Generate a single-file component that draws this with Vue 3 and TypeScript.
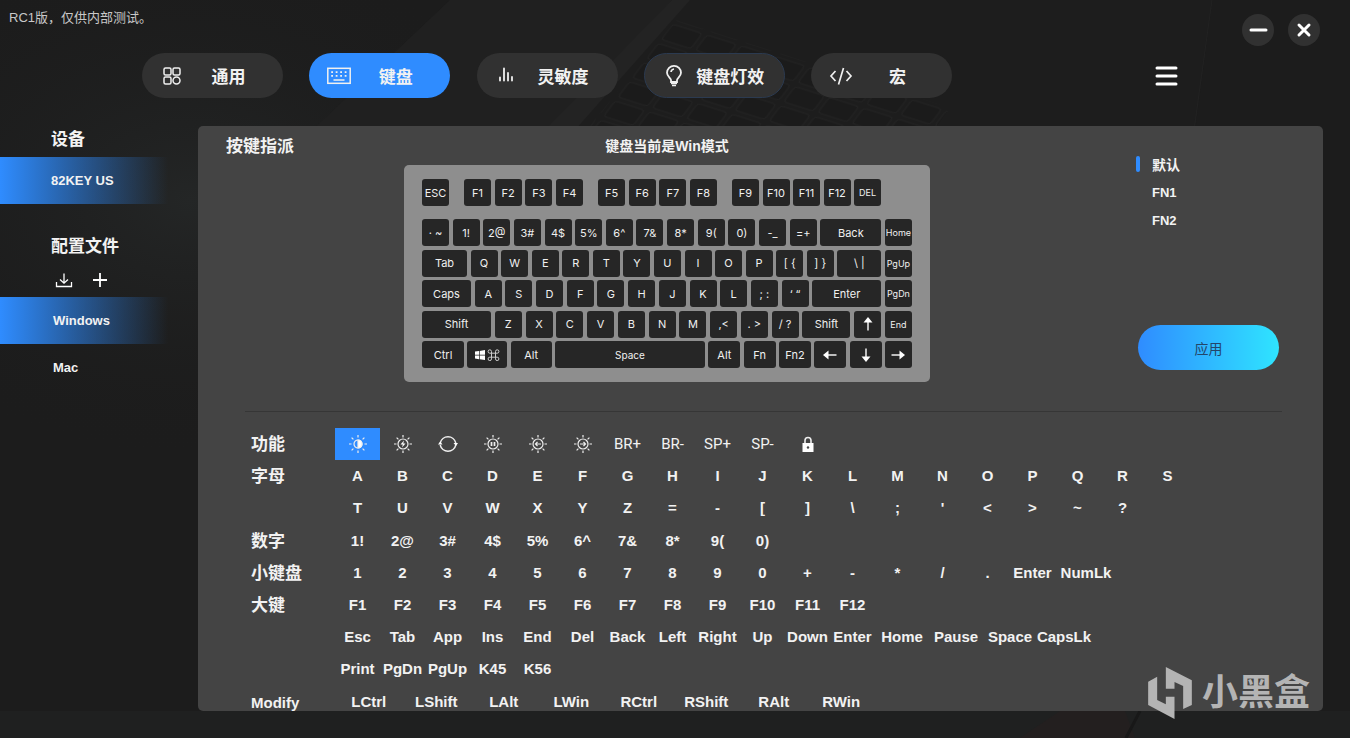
<script setup lang="ts">
import { ref } from 'vue'

interface Key {
  label: string
  w?: number
  size?: 'small' | 'tiny'
  icon?: 'win' | 'up' | 'down' | 'left' | 'right'
}
interface Assign {
  label: string
  icon?: string
  span?: 'wide' | 'broad'
}
interface Group {
  name: string
  rows: Assign[][]
  even?: boolean
}

const tabs = [
  { id: 'general', label: '通用' },
  { id: 'keyboard', label: '键盘' },
  { id: 'sensitivity', label: '灵敏度' },
  { id: 'light', label: '键盘灯效' },
  { id: 'macro', label: '宏' },
]
const activeTab = ref('keyboard')
const profiles = ['Windows', 'Mac']
const activeProfile = ref('Windows')
const layers = ['默认', 'FN1', 'FN2']
const activeLayer = ref('默认')
const activeAssign = ref('cycle-brightness')

const k = (text: string): Key[] => text.split(' ').map((label) => ({ label }))

const functionRow: Key[][] = [
  k('ESC'),
  k('F1 F2 F3 F4'),
  k('F5 F6 F7 F8'),
  [...k('F9 F10 F11 F12'), { label: 'DEL', size: 'tiny' }],
]
const keyRows: Key[][] = [
  [{ label: '· ~' }, ...k('1! 2@ 3# 4$ 5% 6^ 7& 8* 9( 0) -_ =+'), { label: 'Back', w: 61 }, { label: 'Home', size: 'tiny' }],
  [{ label: 'Tab', w: 45 }, ...k('Q W E R T Y U I O P'), { label: '[ {' }, { label: '] }' }, { label: '\\ |', w: 44 }, { label: 'PgUp', size: 'tiny' }],
  [{ label: 'Caps', w: 49 }, ...k('A S D F G H J K L'), { label: '; :' }, { label: '‘ “' }, { label: 'Enter', w: 69 }, { label: 'PgDn', size: 'tiny' }],
  [{ label: 'Shift', w: 69 }, ...k('Z X C V B N M ,<'), { label: '. >' }, { label: '/ ?' }, { label: 'Shift', w: 48 }, { label: '上', icon: 'up' }, { label: 'End', size: 'tiny' }],
  [
    { label: 'Ctrl', w: 42 }, { label: 'Win', w: 40, icon: 'win' }, { label: 'Alt', w: 41 },
    { label: 'Space', w: 150, size: 'small' }, { label: 'Alt', w: 32 }, { label: 'Fn', w: 32 }, { label: 'Fn2', w: 32 },
    { label: '左', w: 32, icon: 'left' }, { label: '下', w: 32, icon: 'down' }, { label: '右', icon: 'right' },
  ],
]

const a = (text: string, span?: Assign['span']): Assign[] => text.split(' ').map((label) => ({ label, span }))
const groups: Group[] = [
  {
    name: '功能',
    rows: [[
      { label: 'cycle-brightness', icon: 'half' }, { label: 'effect', icon: 'bolt' }, { label: 'cycle', icon: 'cycle' },
      { label: 'pause-light', icon: 'pause' }, { label: 'previous-light', icon: 'prev' }, { label: 'next-light', icon: 'next' },
      ...a('BR+ BR- SP+ SP-'), { label: 'lock', icon: 'lock' },
    ]],
  },
  { name: '字母', rows: [a('A B C D E F G H I J K L M N O P Q R S'), a("T U V W X Y Z = - [ ] \\ ; ' < > ~ ?")] },
  { name: '数字', rows: [a('1! 2@ 3# 4$ 5% 6^ 7& 8* 9( 0)')] },
  { name: '小键盘', rows: [[...a('1 2 3 4 5 6 7 8 9 0 + - * / . Enter'), ...a('NumLk', 'broad')]] },
  {
    name: '大键',
    rows: [
      a('F1 F2 F3 F4 F5 F6 F7 F8 F9 F10 F11 F12'),
      [...a('Esc Tab App Ins End Del Back Left Right Up Down Enter'), ...a('Home Pause Space CapsLk', 'wide')],
      a('Print PgDn PgUp K45 K56'),
    ],
  },
  { name: 'Modify', even: true, rows: [a('LCtrl LShift LAlt LWin RCtrl RShift RAlt RWin')] },
]
</script>

<template>
  <div class="app">
    <svg class="backdrop" viewBox="0 0 1350 738" preserveAspectRatio="xMidYMid slice" aria-hidden="true">
      <defs>
        <radialGradient id="glow" cx="0.5" cy="0.5" r="0.5">
          <stop offset="0" stop-color="#242626" />
          <stop offset="1" stop-color="#1c1c1c" stop-opacity="0" />
        </radialGradient>
        <pattern id="keys" width="36" height="24" patternUnits="userSpaceOnUse" patternTransform="matrix(0.95 0.3 -0.6 0.8 672 22)">
          <rect x="2" y="2" width="31" height="19" rx="3" fill="#1b1b1b" stroke="#232323" />
        </pattern>
      </defs>
      <ellipse cx="190" cy="200" rx="360" ry="260" fill="url(#glow)" />
      <path d="M450 0H672L540 170H270Z" fill="#202020" />
      <path d="M672 0H1212L1190 170H540Z" fill="#1d1d1d" />
      <path d="M672 0H690L575 130H545Z" fill="#232323" />
      <path d="M676 20L950 108L920 150H570Z" fill="url(#keys)" />
      <path d="M1212 0L1194 130" fill="none" stroke="#222" />
      <path d="M0 711H1350V738H0Z" fill="#1f2020" />
      <path d="M1060 711H1125L1135 738H1020Z" fill="#231f1f" />
      <path d="M1140 711L1126 738" stroke="#181818" stroke-width="3" />
    </svg>

    <header class="header">
      <div class="titlebar">
        <span class="version">RC1版，仅供内部测试。</span>
        <div class="window-buttons">
          <button type="button" class="round" aria-label="最小化">
            <svg width="32" height="32" viewBox="0 0 32 32"><path d="M9 16H24" /></svg>
          </button>
          <button type="button" class="round" aria-label="关闭">
            <svg width="32" height="32" viewBox="0 0 32 32"><path d="M11 11L21 21M21 11L11 21" /></svg>
          </button>
        </div>
      </div>
      <nav class="nav">
        <div class="tabs">
          <button
            v-for="tab in tabs" :key="tab.id" type="button" class="pill"
            :class="{ active: activeTab === tab.id, outlined: tab.id === 'light' }" @click="activeTab = tab.id"
          >
            <svg v-if="tab.id === 'general'" class="tab-icon" viewBox="0 0 26 26">
              <rect x="5" y="5" width="7" height="7" rx="1.5" /><rect x="14" y="5" width="7" height="7" rx="1.5" />
              <rect x="5" y="14" width="7" height="7" rx="1.5" /><circle cx="17.5" cy="17.5" r="3.5" />
            </svg>
            <svg v-else-if="tab.id === 'keyboard'" class="tab-icon" viewBox="0 0 26 26">
              <rect x="1.8" y="5.3" width="22.4" height="15" />
              <path d="M5.200 9.200H21.500" stroke-width="1.8" stroke-dasharray="1.8 2.7" />
              <path d="M5.200 12.800H21.500" stroke-width="1.8" stroke-dasharray="1.8 2.7" />
              <path d="M7.500 17H18.500" />
            </svg>
            <svg v-else-if="tab.id === 'sensitivity'" class="tab-icon" viewBox="0 0 26 26">
              <path d="M6 17.500V14.500M10 17.500V5.500M14 17.500V10M18 17.500V14" stroke-width="1.8" stroke-linecap="round" />
            </svg>
            <svg v-else-if="tab.id === 'light'" class="tab-icon" viewBox="0 0 26 26">
              <path d="M10 19V17C10 15 6 13.500 6 9.800A7 7 0 0 1 20 9.800C20 13.500 16 15 16 17V19Z" stroke-width="1.8" />
              <path d="M10 9A3.500 3.500 0 0 1 13 6M10 20.500H16M11 22.500H15" stroke-width="1.700" />
            </svg>
            <svg v-else class="tab-icon" viewBox="0 0 26 26">
              <path d="M7.500 8L3 13L7.500 18M18.500 8L23 13L18.500 18M15.500 5L10.500 21.500" stroke-width="1.700" />
            </svg>
            <span class="tab-label">{{ tab.label }}</span>
          </button>
        </div>
        <button type="button" class="menu" aria-label="菜单">
          <svg width="24" height="24" viewBox="0 0 24 24"><path d="M3 4H22M3 12H22M3 20H22" /></svg>
        </button>
      </nav>
    </header>

    <div class="body">
      <aside class="sidebar">
        <h2 class="heading">设备</h2>
        <button type="button" class="side-item device active">82KEY US</button>
        <h2 class="heading second">配置文件</h2>
        <div class="tools">
          <button type="button" class="tool" aria-label="导入">
            <svg width="20" height="20" viewBox="0 0 20 20"><path d="M2.500 12V16.500H17.500V12M10 3.500V13M6 9.500L10 13.200L14 9.500" stroke-width="1.300" /></svg>
          </button>
          <button type="button" class="tool" aria-label="新建">
            <svg width="20" height="20" viewBox="0 0 20 20"><path d="M10 3V17M3 10H17" stroke-width="1.800" /></svg>
          </button>
        </div>
        <button
          v-for="p in profiles" :key="p" type="button" class="side-item"
          :class="{ active: activeProfile === p }" @click="activeProfile = p"
        >{{ p }}</button>
      </aside>

      <main class="panel">
        <section class="top">
          <h2 class="panel-title">按键指派</h2>
          <div class="board-area">
            <h3 class="mode">键盘当前是Win模式</h3>
            <div class="board">
              <div class="key-row function-row">
                <div v-for="(group, gi) in functionRow" :key="gi" class="key-group" :class="'keys-' + group.length">
                  <button v-for="key in group" :key="key.label" type="button" class="key" :class="key.size">{{ key.label }}</button>
                </div>
              </div>
              <div class="key-block">
                <div v-for="(row, ri) in keyRows" :key="ri" class="key-row">
                  <button
                    v-for="(key, ki) in row" :key="ki" type="button" class="key" :class="key.size"
                    :style="key.w ? { width: key.w + 'px' } : undefined" :aria-label="key.icon ? key.label : undefined"
                  >
                    <svg v-if="key.icon === 'win'" width="26" height="12" viewBox="0 0 26 12">
                      <path d="M1 2.500L5 2V5.700H1ZM5.700 1.900L11 1V5.700H5.700ZM1 6.400H5V10.200L1 9.600ZM5.700 6.400H11V11L5.700 10.300Z" fill="#fff" />
                      <path d="M17.500 4.200H21.500V8.200H17.500ZM17.500 4.200H15.800A1.700 1.700 0 1 1 17.500 2.500ZM21.500 4.200V2.500A1.700 1.700 0 1 1 23.200 4.200ZM21.500 8.200H23.200A1.700 1.700 0 1 1 21.500 9.900ZM17.500 8.200V9.900A1.700 1.700 0 1 1 15.800 8.200Z" fill="none" stroke="#ddd" stroke-width="0.900" />
                    </svg>
                    <svg v-else-if="key.icon" class="arrow" :class="key.icon" width="16" height="16" viewBox="0 0 16 16">
                      <path d="M1.500 8H10" stroke="#fff" stroke-width="1.400" /><path d="M9.500 3.500L15 8L9.500 12.500Z" fill="#fff" />
                    </svg>
                    <template v-else>{{ key.label }}</template>
                  </button>
                </div>
              </div>
            </div>
          </div>
          <div class="actions">
            <div class="layers">
              <button
                v-for="layer in layers" :key="layer" type="button" class="layer"
                :class="{ active: activeLayer === layer }" @click="activeLayer = layer"
              >{{ layer }}</button>
            </div>
            <button type="button" class="apply">应用</button>
          </div>
        </section>

        <section class="assign">
          <div v-for="group in groups" :key="group.name" class="assign-group">
            <h3 class="assign-name">{{ group.name }}</h3>
            <div class="assign-rows">
              <div v-for="(row, ri) in group.rows" :key="ri" class="assign-row" :class="{ even: group.even }">
                <button
                  v-for="item in row" :key="item.label" type="button" class="cell"
                  :class="[item.span, { light: group.name === '功能', active: activeAssign === item.label }]"
                  :aria-label="item.icon ? item.label : undefined" @click="activeAssign = item.label"
                >
                  <svg v-if="item.icon === 'lock'" class="fn-icon" viewBox="0 0 20 20">
                    <path d="M7 10V6.500A3 3 0 0 1 13 6.500V10" stroke-width="1.600" />
                    <rect x="4.500" y="9" width="11" height="9" fill="#fff" stroke="none" /><circle cx="10" cy="13.500" r="1.200" fill="#444" stroke="none" />
                  </svg>
                  <svg v-else-if="item.icon === 'cycle'" class="fn-icon" viewBox="0 0 20 20">
                    <path d="M2.200 9A8 8 0 0 1 17.800 9M17.800 11A8 8 0 0 1 2.200 11" stroke-width="1.500" />
                    <path d="M0 10.500L2.200 7.500L4.500 10.500ZM15.500 9L18 12L20 9Z" fill="#fff" stroke="none" />
                  </svg>
                  <svg v-else-if="item.icon" class="fn-icon" viewBox="0 0 20 20">
                    <path d="M10 1V3.500M10 16.500V19M1 10H3.500M16.500 10H19M3.600 3.600L5.400 5.400M14.600 14.600L16.400 16.400M3.600 16.400L5.400 14.600M14.600 5.400L16.400 3.600" />
                    <circle cx="10" cy="10" :r="item.icon === 'half' ? 4 : 5" />
                    <path v-if="item.icon === 'half'" d="M10 6A4 4 0 0 1 10 14Z" fill="#fff" />
                    <path v-else-if="item.icon === 'bolt'" d="M11 6.500L7.500 10.500H9.800L9 13.500L12.500 9.500H10.300Z" fill="#fff" stroke="none" />
                    <path v-else-if="item.icon === 'pause'" d="M8.500 8V12M11.500 8V12" stroke-width="1.700" />
                    <path v-else-if="item.icon === 'prev'" d="M13 10H7.500M9.500 8L7.500 10L9.500 12" />
                    <path v-else d="M7 10H12.500M10.500 8L12.500 10L10.500 12" />
                  </svg>
                  <template v-else>{{ item.label }}</template>
                </button>
              </div>
            </div>
          </div>
        </section>
      </main>
    </div>

    <div class="watermark">
      <svg width="44" height="52" viewBox="295 351 131 156" aria-hidden="true">
        <path d="M295 395L322 380V450L348 463V440H374V507L295 465ZM348 351L426 391V465L400 477V408L374 396V416H348Z" fill="currentColor" />
      </svg>
      <span>小黑盒</span>
    </div>
  </div>
</template>

<style>
body {
  margin: 0;
  background: #1c1c1c;
}
</style>

<style scoped>
.app {
  position: relative;
  display: flex;
  flex-direction: column;
  height: 100vh;
  overflow: hidden;
  box-sizing: border-box;
  padding-bottom: 27px;
  background: #1c1c1c;
  color: #f2f2f2;
  font-family: "Liberation Sans", "Noto Sans CJK SC", sans-serif;
}
.backdrop {
  position: absolute;
  inset: 0;
  width: 100%;
  height: 100%;
}
button {
  margin: 0;
  padding: 0;
  border: 0;
  background: none;
  color: inherit;
  font: inherit;
  cursor: pointer;
}
h2,
h3 {
  margin: 0;
}
svg {
  display: block;
  flex: none;
}
.header {
  position: relative;
  height: 126px;
  flex: none;
}
.titlebar {
  display: flex;
  justify-content: space-between;
  height: 53px;
  padding: 0 30px 0 9px;
}
.version {
  padding-top: 8px;
  font-size: 13px;
  line-height: 20px;
  color: #c8c8c8;
}
.window-buttons {
  display: flex;
  gap: 14px;
  padding-top: 14px;
}
.round {
  width: 32px;
  height: 32px;
  border-radius: 50%;
  background: #313131;
}
.round path,
.menu path {
  fill: none;
  stroke: #fff;
  stroke-width: 3;
  stroke-linecap: round;
}
.nav {
  display: flex;
  align-items: center;
  justify-content: space-between;
  padding: 0 172px 0 142px;
}
.tabs {
  display: flex;
  justify-content: space-between;
  width: 810px;
}
.pill {
  display: flex;
  align-items: center;
  box-sizing: border-box;
  width: 141px;
  height: 45px;
  padding: 0 10px 0 16px;
  border: 1px solid transparent;
  border-radius: 23px;
  background: #313131 border-box;
  font-size: 17px;
  font-weight: 700;
}
.pill.active {
  background: #2f8cff border-box;
}
.pill.outlined {
  border-color: #2b3a50;
}
.tab-icon {
  width: 26px;
  height: 26px;
  fill: none;
  stroke: #f0f0f0;
  stroke-width: 1.5;
}
.tab-label {
  flex: 1;
  text-align: center;
  white-space: nowrap;
}
.menu {
  width: 24px;
  height: 24px;
}
.body {
  position: relative;
  display: flex;
  flex: 1;
  min-height: 0;
  padding-right: 27px;
}
.sidebar {
  display: flex;
  flex-direction: column;
  align-items: flex-start;
  flex: none;
  width: 198px;
}
.heading {
  padding-left: 51px;
  margin-bottom: 3px;
  font-size: 17px;
  line-height: 28px;
}
.heading.second {
  margin: 29px 0 9px;
}
.side-item {
  width: 168px;
  height: 47px;
  padding-left: 53px;
  font-size: 13px;
  font-weight: 700;
  text-align: left;
}
.side-item.device {
  padding-left: 51px;
}
.side-item.active {
  background: linear-gradient(90deg, #2f8cff 0, #2c7de0 24px, rgba(47, 140, 255, 0) 100%);
}
.tools {
  display: flex;
  gap: 16px;
  margin-bottom: 7px;
  padding-left: 54px;
}
.tool path {
  fill: none;
  stroke: #fff;
}
.panel {
  flex: 1;
  min-width: 0;
  overflow: hidden;
  border-radius: 5px;
  background: #444;
}
.top {
  display: grid;
  grid-template-columns: 178px 526px 1fr;
  margin-bottom: 29px;
  padding: 0 43px 0 28px;
}
.panel-title {
  padding-top: 7px;
  font-size: 17px;
  line-height: 28px;
}
.mode {
  padding: 10px 0 9px;
  font-size: 14px;
  line-height: 20px;
  text-align: center;
}
.board {
  box-sizing: border-box;
  padding: 14px 18px;
  border-radius: 5px;
  background: #8e8e8e;
}
.key-row {
  display: flex;
  justify-content: space-between;
}
.function-row {
  margin: 0 31px 13px 0;
}
.key-group {
  display: flex;
  justify-content: space-between;
}
.keys-4 {
  width: 119px;
}
.keys-5 {
  width: 149px;
}
.key-block {
  display: flex;
  flex-direction: column;
  justify-content: space-between;
  height: 149px;
}
.key {
  display: flex;
  align-items: center;
  justify-content: center;
  flex: none;
  width: 27px;
  height: 27px;
  border-radius: 3px;
  background: #262626;
  color: #f0f0f0;
  font-family: Inter, "Noto Sans CJK SC", sans-serif;
  font-size: 11px;
  white-space: pre;
}
.key.small {
  font-size: 10px;
}
.key.tiny {
  font-size: 9px;
}
.arrow.left {
  transform: rotate(180deg);
}
.arrow.up {
  transform: rotate(-90deg);
}
.arrow.down {
  transform: rotate(90deg);
}
.actions {
  display: flex;
  flex-direction: column;
  align-items: flex-start;
  justify-self: end;
  width: 144px;
}
.layers {
  display: flex;
  flex-direction: column;
  width: 100%;
  padding-top: 24px;
}
.layer {
  display: flex;
  align-items: center;
  height: 28px;
  gap: 12px;
  font-size: 13px;
  font-weight: 700;
}
.layer:first-child {
  font-size: 14px;
}
.layer::before {
  content: "";
  width: 4px;
  height: 16px;
  border-radius: 2px;
}
.layer.active::before {
  background: #2f8cff;
}
.apply {
  width: 141px;
  height: 45px;
  margin: 91px 0 0 2px;
  border-radius: 23px;
  background: linear-gradient(90deg, #2f8cff, #2fe4ff);
  color: #24466a;
  font-size: 14px;
}
.assign {
  margin: 0 41px 0 47px;
  padding: 16px 0 0 6px;
  border-top: 1px solid #363636;
}
.assign-group {
  display: flex;
}
.assign-group:nth-child(2),
.assign-group:nth-child(5) {
  margin-bottom: 1px;
}
.assign-name {
  flex: none;
  width: 84px;
  height: 32px;
  font-size: 17px;
  line-height: 34px;
}
.assign-group:last-child .assign-name {
  font-size: 15px;
}
.assign-row {
  display: flex;
}
.assign-row.even {
  display: grid;
  grid-template-columns: repeat(8, 1fr);
  width: 540px;
}
.cell {
  display: flex;
  align-items: center;
  justify-content: center;
  width: 45px;
  height: 32px;
  padding-bottom: 2px;
  font-size: 15px;
  font-weight: 700;
  white-space: nowrap;
}
.cell.wide {
  width: 54px;
}
.cell.broad {
  width: 62px;
}
.even .cell {
  width: auto;
}
.cell.light {
  padding-bottom: 0;
  font-family: Roboto, sans-serif;
  font-weight: 400;
}
.cell.active {
  background: #2f8cff;
}
.fn-icon {
  width: 20px;
  height: 20px;
  fill: none;
  stroke: #eee;
  stroke-width: 1.2;
}
.watermark {
  position: absolute;
  right: 40px;
  bottom: 19px;
  display: flex;
  align-items: center;
  gap: 10px;
  color: #b4b4b4;
  font-size: 36px;
  font-weight: 700;
  line-height: 52px;
  pointer-events: none;
}
</style>
